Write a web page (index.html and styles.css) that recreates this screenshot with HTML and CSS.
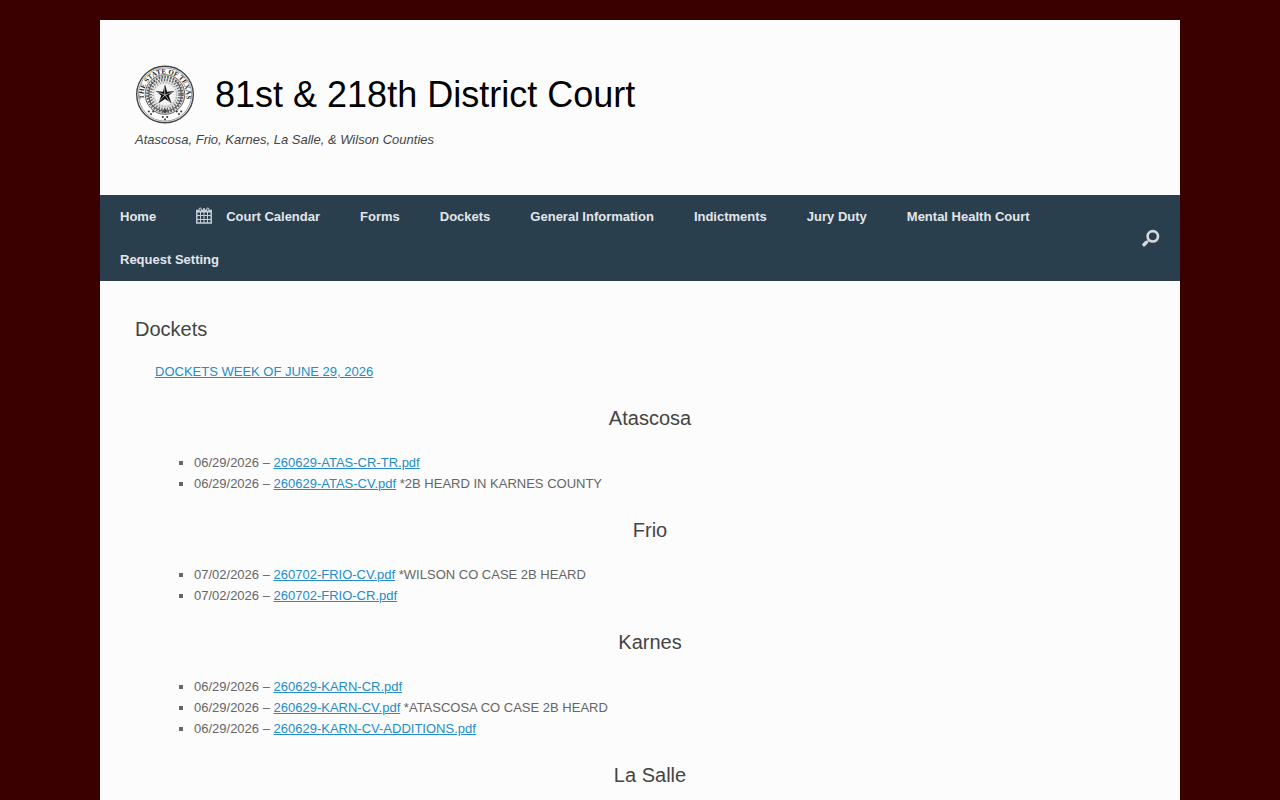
FILE: index.html
```html
<!DOCTYPE html>
<html lang="en">
<head>
<meta charset="utf-8">
<meta name="viewport" content="width=device-width, initial-scale=1">
<title>Dockets – 81st &amp; 218th District Court</title>
<link rel="stylesheet" href="styles.css">
</head>
<body>
<div class="page">
  <header class="masthead">
    <div class="brand">
      <svg class="seal" viewBox="0 0 60 60" aria-hidden="true">
        <defs>
          <path id="ring" d="M10.700 39A21.300 21.300 0 1 1 49.300 39"/>
          <g id="dots"><circle cx="-2.200" cy="-1" r="1"/><circle cx="2.200" cy="-1" r="1"/><circle cx="0" cy="1.400" r="1"/></g>
        </defs>
        <circle cx="30" cy="29.500" r="28.300" fill="#fff" stroke="#444" stroke-width="1.400"/>
        <circle cx="30" cy="29.500" r="26.600" fill="none" stroke="#777" stroke-width=".7"/>
        <circle cx="30" cy="29.500" r="19.800" fill="#e4e4e4" stroke="#555" stroke-width=".9"/>
        <text class="seal-text"><textPath href="#ring" startOffset="50%" text-anchor="middle">THE STATE OF TEXAS</textPath></text>
        <g fill="none" stroke="#666">
          <circle cx="30" cy="29.500" r="17.500" stroke-width="2.600" stroke-dasharray="1.700 1.200"/>
          <circle cx="30" cy="29.500" r="14.600" stroke-width="2.600" stroke-dasharray="1.300 1.500"/>
          <circle cx="30" cy="29.500" r="12" stroke="#999" stroke-width="1.500" stroke-dasharray="1 2"/>
          <path d="M28 46C18 44 13 37 14 28C14 22 17 18 20 16M32 46C42 44 47 37 46 28C46 22 43 18 40 16" stroke="#444" stroke-width=".9"/>
        </g>
        <circle cx="30" cy="29.500" r="10.500" fill="#f4f4f4"/>
        <path d="M30 19.500l2.100 7.200 7.200-.7-5.500 4.600 2.700 7.600-6.500-4.200-6.500 4.200 2.700-7.600-5.500-4.600 7.200.7z" fill="#111"/>
        <path d="M30 30l-.8-8M30 30l8-3.200M30 30l5 7M30 30l-6 6.500M30 30l-7.500-3" stroke="#eee" stroke-width=".6"/>
        <circle cx="30" cy="46" r="2" fill="#444"/>
        <g fill="#333"><use href="#dots" x="16" y="47.500"/><use href="#dots" x="30" y="53"/><use href="#dots" x="44" y="47.500"/></g>
      </svg>
      <h1 class="site-title">81st &amp; 218th District Court</h1>
    </div>
    <p class="tagline">Atascosa, Frio, Karnes, La Salle, &amp; Wilson Counties</p>
  </header>

  <nav class="main-nav" aria-label="Main">
    <ul class="menu">
      <li><a href="#">Home</a></li>
      <li><a href="#"><svg class="calendar-icon" viewBox="0 0 16 17" aria-hidden="true"><path fill="none" stroke="currentColor" d="M1 8.500h14M1 12.500h14M4.500 5v11M8 5v11M11.500 5v11"/><path fill="none" stroke="currentColor" stroke-width="1.500" d="M.8 3.500h14.400v12.500H.8z"/><path fill="currentColor" d="M1 3h14v2.500H1z"/><path fill="none" stroke="currentColor" stroke-width="3" stroke-linecap="round" d="M4.200 2v1.500M11.800 2v1.500"/><path fill="none" stroke="currentColor" stroke-width="2" stroke-linecap="round" d="M8 2v1.500"/><path fill="none" stroke="#293f4e" stroke-width=".9" d="M4.200 1.500v2.500M11.800 1.500v2.500"/></svg>Court Calendar</a></li>
      <li><a href="#">Forms</a></li>
      <li><a href="#">Dockets</a></li>
      <li><a href="#">General Information</a></li>
      <li><a href="#">Indictments</a></li>
      <li><a href="#">Jury Duty</a></li>
      <li><a href="#">Mental Health Court</a></li>
      <li><a href="#">Request Setting</a></li>
    </ul>
    <button class="search" type="button" aria-label="Search"><svg viewBox="0 0 18 18" aria-hidden="true"><g fill="none" stroke="currentColor"><circle cx="10.800" cy="7.300" r="5.200" stroke-width="2.700"/><path d="M7 11L5.500 12.500" stroke-width="1.600"/><path d="M4.400 13.300L2 15.700" stroke-width="3.400" stroke-linecap="round"/></g></svg></button>
  </nav>

  <main class="content">
    <h2 class="page-title">Dockets</h2>
    <div class="entry">
      <p class="week"><a href="#">DOCKETS WEEK OF JUNE 29, 2026</a></p>
      <h3>Atascosa</h3>
      <ul>
        <li>06/29/2026 – <a href="#">260629-ATAS-CR-TR.pdf</a></li>
        <li>06/29/2026 – <a href="#">260629-ATAS-CV.pdf</a> *2B HEARD IN KARNES COUNTY</li>
      </ul>
      <h3>Frio</h3>
      <ul>
        <li>07/02/2026 – <a href="#">260702-FRIO-CV.pdf</a> *WILSON CO CASE 2B HEARD</li>
        <li>07/02/2026 – <a href="#">260702-FRIO-CR.pdf</a></li>
      </ul>
      <h3>Karnes</h3>
      <ul>
        <li>06/29/2026 – <a href="#">260629-KARN-CR.pdf</a></li>
        <li>06/29/2026 – <a href="#">260629-KARN-CV.pdf</a> *ATASCOSA CO CASE 2B HEARD</li>
        <li>06/29/2026 – <a href="#">260629-KARN-CV-ADDITIONS.pdf</a></li>
      </ul>
      <h3>La Salle</h3>
    </div>
  </main>
</div>
</body>
</html>
```
FILE: styles.css
```css
* { box-sizing: border-box; }

body {
  margin: 0;
  padding: 20px 20px 0;
  background: #3a0000;
  color: #666;
  font: 13px/21px "Liberation Sans", Arial, sans-serif;
}

h1, h2, h3, p, ul { margin: 0; padding: 0; font-weight: normal; }

.page {
  max-width: 1080px;
  min-height: calc(100vh - 20px);
  margin: 0 auto;
  background: #fcfcfc;
}

.masthead { padding: 45px 35px; }
.brand { display: flex; align-items: center; gap: 20px; }
.seal { width: 60px; height: 60px; flex: none; }
.seal-text { font: bold 7px "Liberation Serif", serif; fill: #222; }
.site-title { color: #000; font-size: 36px; line-height: 44px; }
.tagline { margin-top: 4px; color: #444; font-style: italic; }

.main-nav {
  display: flex;
  align-items: center;
  background: #293f4e;
  color: #e2e6ea;
}
.menu { display: flex; flex-wrap: wrap; flex: 1; list-style: none; }
.menu a {
  display: flex;
  align-items: center;
  height: 43px;
  padding: 0 20px;
  color: inherit;
  font-weight: bold;
  text-decoration: none;
}
.calendar-icon { width: 16px; height: 17px; margin: 0 14px 2px 0; color: #c6ced6; }
.search {
  display: flex;
  padding: 20px;
  border: 0;
  background: none;
  color: #d2d9df;
  cursor: pointer;
}
.search svg { width: 18px; height: 18px; }

.content { padding: 36px 35px 14px; }
.page-title, .entry h3 { color: #444; font-size: 20px; line-height: 24px; }
.entry { padding: 21px 0 0 20px; }
.entry a { color: #248cc8; }
.week { line-height: 20px; }
.entry h3 { margin-top: 24px; text-align: center; }
.entry ul { margin-top: 22px; padding-left: 39px; list-style: square; }
```
